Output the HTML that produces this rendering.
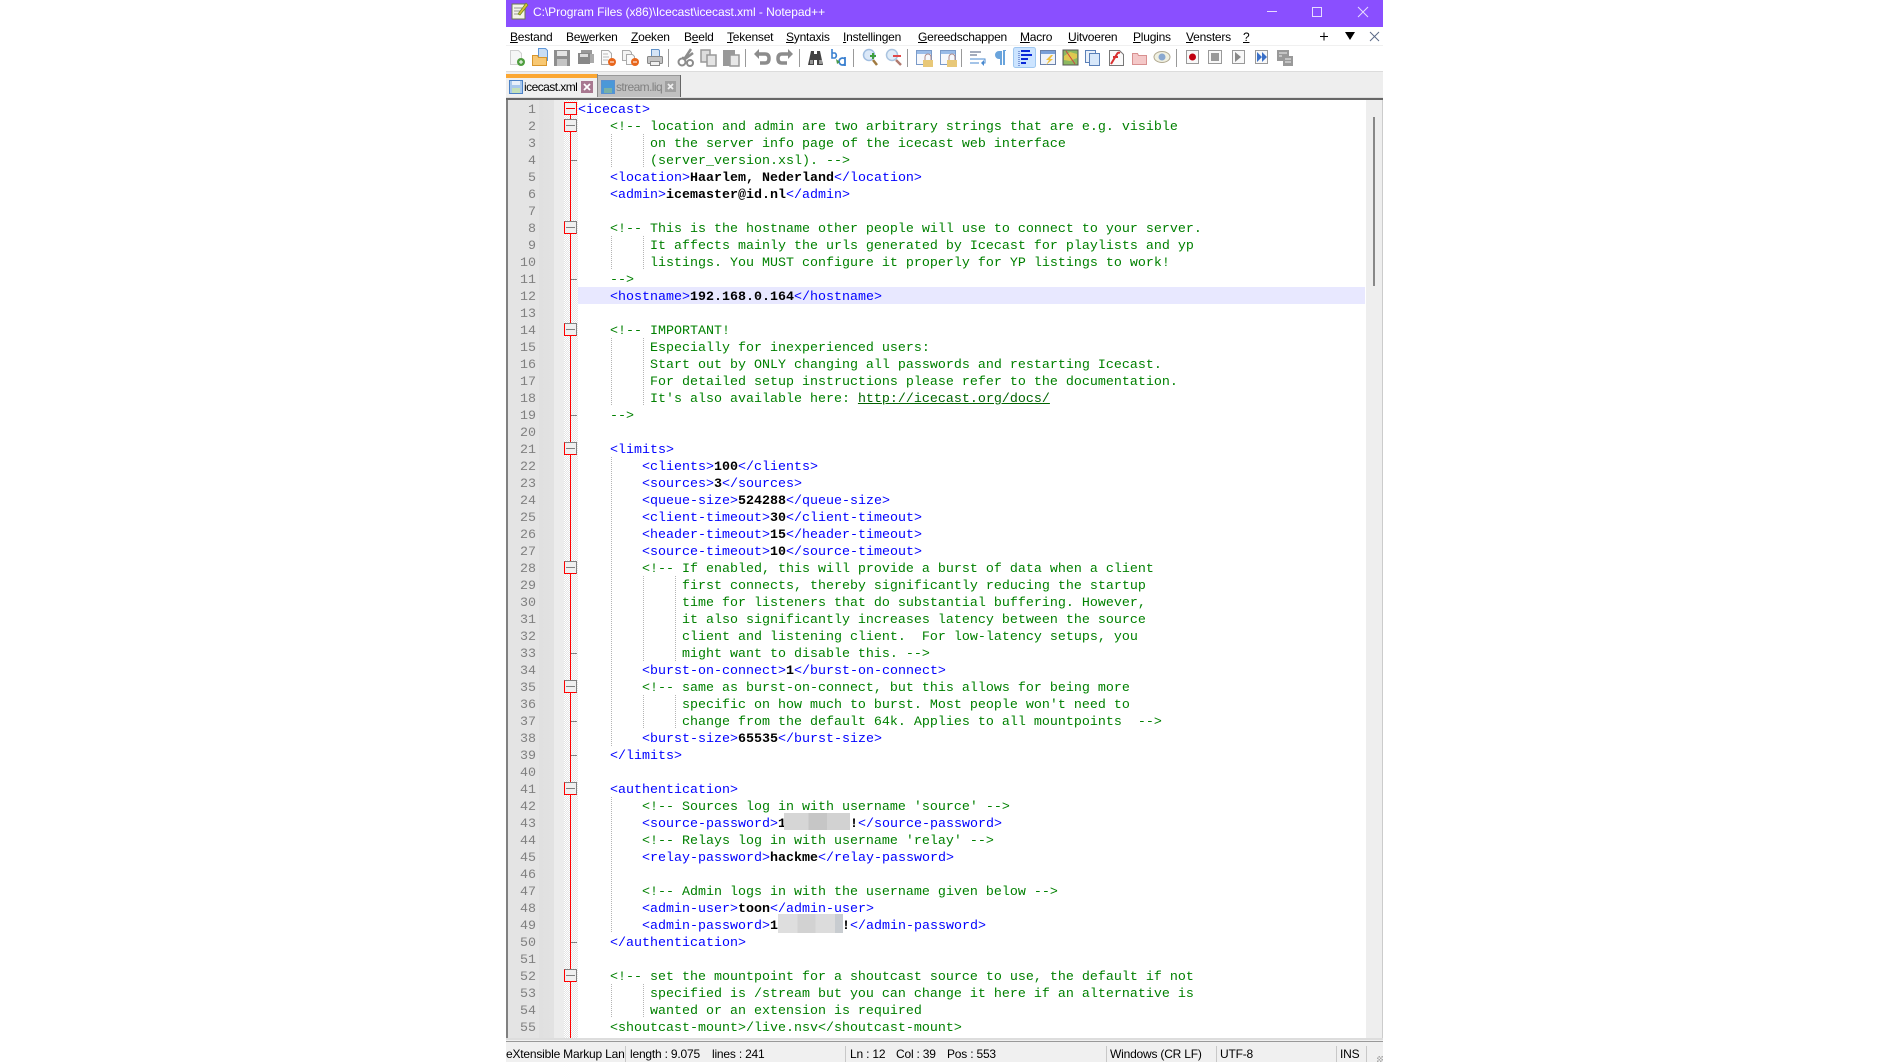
<!DOCTYPE html>
<html><head><meta charset="utf-8"><title>Notepad++</title>
<style>
html,body{margin:0;padding:0;width:1888px;height:1062px;overflow:hidden;background:#fff}
.a,.t,.m,.s{position:absolute}
.t,.m,.s{font-family:"Liberation Sans",sans-serif;white-space:pre}
.m{top:28px;font-size:12px;line-height:18px;color:#000;letter-spacing:-.22px}
.s{top:1046px;font-size:12px;line-height:17px;color:#000;letter-spacing:-.2px}
pre{position:absolute;margin:0;left:578px;top:102px;font:13.333px/17px "Liberation Mono",monospace;color:#008000}
pre b{color:#000;font-weight:700}
pre i{font-style:normal;color:#00f}
pre u{color:#006400}
#nums{position:absolute;left:507px;top:102px;width:29px;text-align:right;font:13.333px/17px "Liberation Mono",monospace;color:#808080;white-space:pre}
.g{position:absolute;width:1px;background:repeating-linear-gradient(to bottom,#b4b4b4 0 1px,transparent 1px 2px)}
.f{position:absolute;left:564px;width:13px;height:13px;box-sizing:border-box;background:#f0f0f0;border:1px solid #808080;border-left-color:#f00;border-bottom-color:#f00}
.f:after{content:"";position:absolute;left:1px;right:1px;top:5px;height:1px;background:#808080}
.k{position:absolute;left:571px;width:6px;height:1px;background:#808080}
.sp{position:absolute;width:1px;top:1046px;height:16px;background:#c8c8c8}
</style></head><body>
<div class="a" style="left:506px;top:0;width:877px;height:27px;background:#8a4fff"></div>
<div class="t" style="left:533px;top:3px;font-size:12px;line-height:18px;color:#fff;letter-spacing:-.05px">C:\Program Files (x86)\Icecast\icecast.xml - Notepad++</div>
<svg class="a" style="left:0;top:0" width="1888" height="100" viewBox="0 0 1888 100">
<!-- app icon -->
<rect x="512" y="4" width="13" height="15" fill="#f4f4e8" stroke="#6a7a50"/><path d="M514 8h8M514 11h6M514 14h6" stroke="#999"/><path d="M518 14l8-11 2 2-8 10z" fill="#d9c23a" stroke="#6a8a20" stroke-width=".7"/>
<!-- window controls -->
<path d="M1267 11.500h10" stroke="#e8dcff"/><rect x="1312.500" y="7.500" width="9" height="9" fill="none" stroke="#e8dcff"/><path d="M1358 7l10 10M1368 7l-10 10" stroke="#e8dcff"/>
<!-- close x right -->
<path d="M1370 32l9 9M1379 32l-9 9" stroke="#5a6a88" fill="none"/>
<path d="M1345 32h10l-5 8z" fill="#000"/><path d="M1320 36.500h8M1324 32.500v8" stroke="#000"/>
<!-- toolbar -->
<rect x="506" y="45" width="877" height="1" fill="#f0f0f0"/>
<rect x="506" y="71" width="877" height="27" fill="#eee"/><rect x="506" y="71" width="877" height="1" fill="#dcdcdc"/>
<!-- new -->
<path d="M510.500 50.500h8l3 3v11h-11z" fill="#f6f6f6" stroke="#d0d0d0"/><circle cx="521" cy="62" r="4" fill="#4f9e3f"/><path d="M519 62h4M521 60v4" stroke="#fff"/>
<!-- open -->
<path d="M538.500 48.500h7l2 2v10h-9z" fill="#c8ddf4" stroke="#5f97d8"/><path d="M532.500 55.500h5l1 2h8v8h-14z" fill="#f8c873" stroke="#d8962c"/>
<!-- save -->
<rect x="554" y="50" width="16" height="16" fill="#8e8e8e"/><rect x="557" y="51" width="10" height="5" fill="#e4e4e4"/><rect x="557" y="59" width="10" height="7" fill="#c4c4c4"/>
<!-- save all -->
<rect x="581" y="50" width="11" height="9" fill="#999"/><rect x="578" y="53" width="12" height="11" fill="#888"/><rect x="580" y="54" width="8" height="3" fill="#ddd"/>
<rect x="590" y="54" width="4" height="9" fill="#aaa"/>
<!-- close -->
<path d="M601.500 50.500h7l3 3v11h-10z" fill="#fafafa" stroke="#aaa"/><path d="M603 54h5M603 57h6M603 60h5" stroke="#bbb"/><circle cx="612" cy="62" r="4" fill="#e8661c"/><path d="M610 62h4" stroke="#fff"/>
<!-- close all -->
<path d="M622.500 50.500h7l2 2v8h-9z" fill="#f4f4f4" stroke="#aaa"/><path d="M626.500 54.500h6l2 2v8h-8z" fill="#fafafa" stroke="#aaa"/><circle cx="635" cy="62" r="4" fill="#e8661c"/><path d="M633 62h4" stroke="#fff"/>
<!-- print -->
<path d="M651.500 49.500h7l1 1v7h-8z" fill="#d4e4f6" stroke="#6292c8"/><rect x="647.500" y="56.500" width="15" height="7" rx="1" fill="#c4c4c4" stroke="#888"/><rect x="650.500" y="61.500" width="9" height="4" fill="#f0f0f0" stroke="#888"/>
<g fill="#999"><rect x="668" y="49" width="1" height="18"/><rect x="745" y="49" width="1" height="18"/><rect x="799" y="49" width="1" height="18"/><rect x="853" y="49" width="1" height="18"/><rect x="907" y="49" width="1" height="18"/><rect x="961" y="49" width="1" height="18"/><rect x="1176" y="49" width="1" height="18"/></g>
<!-- cut -->
<path d="M691 49l-6 9-3 0M693 53l-8 6" stroke="#8c8c8c" stroke-width="2.500" fill="none"/><circle cx="682" cy="62" r="3.500" fill="none" stroke="#8c8c8c" stroke-width="2"/><circle cx="690" cy="63" r="3" fill="none" stroke="#8c8c8c" stroke-width="2"/>
<!-- copy -->
<rect x="701" y="50" width="9" height="12" fill="#ddd" stroke="#999" stroke-width="1.500"/><rect x="707" y="55" width="9" height="11" fill="#e4e4e4" stroke="#999" stroke-width="1.500"/>
<!-- paste -->
<rect x="723" y="50" width="12" height="16" fill="#999"/><rect x="730" y="55" width="9" height="11" fill="#e8e8e8" stroke="#999" stroke-width="1.500"/>
<!-- undo redo -->
<path d="M757 54h8q4 0 4 4.500t-4 4.500h-5" fill="none" stroke="#8c8c8c" stroke-width="3.500"/><path d="M754 54l5-5v10z" fill="#8c8c8c"/>
<path d="M790 54h-8q-4 0-4 4.500t4 4.500h5" fill="none" stroke="#8c8c8c" stroke-width="3.500"/><path d="M793 54l-5-5v10z" fill="#8c8c8c"/>
<!-- find -->
<path d="M811 51h3v3h3v-3h3l3 14h-6v-5h-3v5h-6z" fill="#444"/><rect x="810" y="60" width="3" height="4" fill="#999"/><rect x="819" y="60" width="3" height="4" fill="#999"/>
<!-- replace -->
<path d="M832 49v9h3a3 3 0 0 0 0-5h-3" fill="none" stroke="#3a80d0" stroke-width="1.600"/><path d="M845 59a3.500 3.500 0 1 0 0 5v2M845 57v9" fill="none" stroke="#3a80d0" stroke-width="1.800"/><path d="M836 59l4 3-3 2" fill="#4a9a4a"/>
<!-- zoom -->
<circle cx="869" cy="55" r="5.500" fill="#dbe8f8" stroke="#a0bde0" stroke-width="1.500"/><path d="M873 60l4 5" stroke="#a07a40" stroke-width="2.500"/><path d="M870 56h6M873 53v6" stroke="#3e9e3e" stroke-width="2"/>
<circle cx="892" cy="55" r="5.500" fill="#e0ecf8" stroke="#aac4e0" stroke-width="1.500"/><path d="M896 60l5 5" stroke="#b07a70" stroke-width="2.500"/><path d="M893 56h8" stroke="#e04848" stroke-width="2"/>
<!-- sync -->
<rect x="916.500" y="50.500" width="15" height="14" fill="#f6f8fc" stroke="#7a9ac8"/><rect x="917" y="51" width="14" height="3" fill="#9abce8"/><path d="M925 60v-3a3 3 0 0 1 6 0v3" fill="none" stroke="#a88"/><rect x="923" y="60" width="10" height="7" fill="#e8c878"/>
<rect x="940.500" y="50.500" width="15" height="14" fill="#f6f8fc" stroke="#7a9ac8"/><rect x="941" y="51" width="14" height="3" fill="#9abce8"/><path d="M949 60v-3a3 3 0 0 1 6 0v3" fill="none" stroke="#a88"/><rect x="947" y="60" width="10" height="7" fill="#e8c878"/>
<!-- wrap -->
<path d="M970 52h11M970 55h7" stroke="#4a5a78" fill="none"/><path d="M970 63h9M970 59h15v4h-2" stroke="#4a8ad0" fill="none"/><path d="M981 63l3-3v6z" fill="#4a8ad0"/>
<!-- pilcrow -->
<path d="M1003 51h-4a3.500 3.500 0 0 0 0 8h1v6h2v-14M1003 51v14h2v-14h1v-1h-3z" fill="#6aa4dc"/>
<!-- active -->
<rect x="1013.500" y="47.500" width="22" height="20" rx="2" fill="#cce4ff" stroke="#a0c8f0"/>
<path d="M1019 51v15" stroke="#3050b0" stroke-dasharray="1 1"/><path d="M1021 51h9M1021 55h11M1021 59h7M1021 63h5" stroke="#0a28d8" stroke-width="2"/>
<!-- udl -->
<rect x="1040.500" y="50.500" width="15" height="14" fill="#eef3fb" stroke="#6a80a8"/><rect x="1041" y="51" width="14" height="3" fill="#7aa0d8"/><path d="M1051 55l-5 5h3l-3 5 7-6h-3l3-4z" fill="#f0c040"/>
<!-- doc map -->
<rect x="1063" y="50" width="15" height="15" fill="#8cb860" stroke="#555"/><path d="M1064 56l6-4 7 2v4l-7 3-6-1z" fill="#e0c850"/><path d="M1066 51l9 13" stroke="#d04040"/>
<!-- doc list -->
<rect x="1085.500" y="50.500" width="10" height="12" fill="#e8f0fa" stroke="#5a80b8"/><rect x="1089.500" y="53.500" width="10" height="12" fill="#d8e8fa" stroke="#5a80b8"/>
<!-- func -->
<path d="M1109.500 50.500h10l4 4v11h-14z" fill="#fafafa" stroke="#777"/><path d="M1111 64l6-10q1-2 3-1M1113 57h5" stroke="#d83030" stroke-width="2" fill="none"/>
<!-- folder -->
<path d="M1132.500 53.500h5l1 2h8v9h-14z" fill="#f4c8c8" stroke="#d89090"/>
<!-- monitor -->
<ellipse cx="1162" cy="57" rx="8" ry="5.500" fill="#f0f0e0" stroke="#b0a890"/><circle cx="1162" cy="57" r="3.500" fill="#8aa8d0"/>
<!-- macro -->
<rect x="1186.500" y="50.500" width="12" height="13" fill="#f8f8f8" stroke="#999"/><circle cx="1192.500" cy="57" r="3.500" fill="#c00010"/>
<rect x="1208.500" y="50.500" width="13" height="13" fill="#f8f8f8" stroke="#999"/><rect x="1211" y="53" width="8" height="8" fill="#999"/>
<rect x="1232.500" y="50.500" width="12" height="13" fill="#f8f8f8" stroke="#999"/><path d="M1235 52l6 5-6 5z" fill="#888"/>
<rect x="1255.500" y="50.500" width="12" height="13" fill="#f8f8f8" stroke="#999"/><path d="M1257 52l5 5-5 5zM1262 52l5 5-5 5z" fill="#3a70c8"/>
<rect x="1277" y="50" width="12" height="11" fill="#999"/><rect x="1283" y="56" width="10" height="10" fill="#999"/><path d="M1279 53h8M1279 56h3M1285 59h6M1285 62h6" stroke="#eee"/>
<!-- tabs -->
<rect x="506" y="74" width="91" height="23" fill="#f0f0f0"/><rect x="506" y="74" width="91" height="4" fill="#fba733"/>
<rect x="597" y="74" width="1" height="23" fill="#888"/>
<rect x="598" y="75" width="82" height="22" fill="#c0c0c0"/><rect x="598" y="75" width="82" height="1" fill="#999"/><rect x="680" y="75" width="1" height="22" fill="#666"/>
<rect x="509.500" y="80.500" width="13" height="13" fill="#a8c8ec" stroke="#4a80c4"/><rect x="512" y="81" width="8" height="4" fill="#e8f0fa"/><rect x="512" y="88" width="8" height="5" fill="#c4e0b8"/>
<rect x="581" y="81" width="12" height="12" fill="#a87890"/><path d="M584 84l6 6M590 84l-6 6" stroke="#fff" stroke-width="1.800"/>
<rect x="601.500" y="80.500" width="13" height="13" fill="#4a98d8" stroke="#5a90d0"/><rect x="604" y="88" width="8" height="5" fill="#78b0a8"/>
<rect x="665" y="81" width="11" height="11" fill="#a0a0a0"/><path d="M668 84l5 5M673 84l-5 5" stroke="#eee" stroke-width="1.800"/>
</svg>
<div class="t" style="left:524px;top:78px;font-size:12px;line-height:18px;color:#000;letter-spacing:-.55px">icecast.xml</div>
<div class="t" style="left:616px;top:78px;font-size:12px;line-height:18px;color:#808080;letter-spacing:-.6px">stream.liq</div>
<div class="m" style="left:510px"><u>B</u>estand</div>
<div class="m" style="left:566px">Be<u>w</u>erken</div>
<div class="m" style="left:631px"><u>Z</u>oeken</div>
<div class="m" style="left:684px">B<u>e</u>eld</div>
<div class="m" style="left:727px"><u>T</u>ekenset</div>
<div class="m" style="left:786px"><u>S</u>yntaxis</div>
<div class="m" style="left:843px"><u>I</u>nstellingen</div>
<div class="m" style="left:918px"><u>G</u>ereedschappen</div>
<div class="m" style="left:1020px"><u>M</u>acro</div>
<div class="m" style="left:1068px"><u>U</u>itvoeren</div>
<div class="m" style="left:1133px"><u>P</u>lugins</div>
<div class="m" style="left:1186px"><u>V</u>ensters</div>
<div class="m" style="left:1243px"><u>?</u></div>

<!-- editor frame -->
<div class="a" style="left:506px;top:97px;width:877px;height:1px;background:#ddd"></div>
<div class="a" style="left:506px;top:98px;width:877px;height:2px;background:#666"></div>
<div class="a" style="left:506px;top:100px;width:2px;height:938px;background:#808080"></div>
<div class="a" style="left:508px;top:100px;width:31px;height:938px;background:#e4e4e4"></div>
<div class="a" style="left:539px;top:100px;width:25px;height:938px;background:linear-gradient(to right,#e0e0e0,#e2e2e2 60%,#ececec 60%,#ececec)"></div>
<div class="a" style="left:564px;top:100px;width:14px;height:938px;background:repeating-conic-gradient(#e4e4e4 0 25%,#fff 0 50%) 0 0/2px 2px"></div>
<div class="a" style="left:578px;top:287px;width:787px;height:17px;background:#e8e8ff"></div>
<div class="a" style="left:1366px;top:100px;width:16px;height:938px;background:#eee"></div>
<div class="a" style="left:1382px;top:100px;width:1px;height:938px;background:#ccc"></div>
<div class="a" style="left:1373px;top:117px;width:2px;height:169px;background:#888"></div>

<div class="a" style="left:570px;top:115px;width:1px;height:923px;background:#f00"></div>
<div class="f" style="top:102px;border-color:#f00"></div><div class="a" style="left:566px;top:108px;width:9px;height:1px;background:#f00"></div>
<div class="f" style="top:119px"></div><div class="f" style="top:221px"></div><div class="f" style="top:323px"></div><div class="f" style="top:442px"></div><div class="f" style="top:561px"></div><div class="f" style="top:680px"></div><div class="f" style="top:782px"></div><div class="f" style="top:969px"></div>
<div class="k" style="top:160px"></div><div class="k" style="top:279px"></div><div class="k" style="top:415px"></div><div class="k" style="top:653px"></div><div class="k" style="top:721px"></div><div class="k" style="top:755px"></div><div class="k" style="top:942px"></div>

<div class="g" style="left:611px;top:134px;height:34px"></div><div class="g" style="left:643px;top:134px;height:34px"></div>
<div class="g" style="left:611px;top:236px;height:34px"></div><div class="g" style="left:643px;top:236px;height:34px"></div>
<div class="g" style="left:611px;top:338px;height:68px"></div><div class="g" style="left:643px;top:338px;height:68px"></div>
<div class="g" style="left:611px;top:457px;height:289px"></div>
<div class="g" style="left:643px;top:576px;height:85px"></div><div class="g" style="left:675px;top:576px;height:85px"></div>
<div class="g" style="left:643px;top:695px;height:34px"></div><div class="g" style="left:675px;top:695px;height:34px"></div>
<div class="g" style="left:611px;top:797px;height:136px"></div>
<div class="g" style="left:611px;top:984px;height:34px"></div><div class="g" style="left:643px;top:984px;height:34px"></div>

<div id="nums">1
2
3
4
5
6
7
8
9
10
11
12
13
14
15
16
17
18
19
20
21
22
23
24
25
26
27
28
29
30
31
32
33
34
35
36
37
38
39
40
41
42
43
44
45
46
47
48
49
50
51
52
53
54
55</div>
<pre><i>&lt;icecast&gt;</i>
    &lt;!-- location and admin are two arbitrary strings that are e.g. visible
         on the server info page of the icecast web interface
         (server_version.xsl). --&gt;
    <i>&lt;location&gt;</i><b>Haarlem, Nederland</b><i>&lt;/location&gt;</i>
    <i>&lt;admin&gt;</i><b>icemaster@id.nl</b><i>&lt;/admin&gt;</i>

    &lt;!-- This is the hostname other people will use to connect to your server.
         It affects mainly the urls generated by Icecast for playlists and yp
         listings. You MUST configure it properly for YP listings to work!
    --&gt;
    <i>&lt;hostname&gt;</i><b>192.168.0.164</b><i>&lt;/hostname&gt;</i>

    &lt;!-- IMPORTANT!
         Especially for inexperienced users:
         Start out by ONLY changing all passwords and restarting Icecast.
         For detailed setup instructions please refer to the documentation.
         It's also available here: <u>http://icecast.org/docs/</u>
    --&gt;

    <i>&lt;limits&gt;</i>
        <i>&lt;clients&gt;</i><b>100</b><i>&lt;/clients&gt;</i>
        <i>&lt;sources&gt;</i><b>3</b><i>&lt;/sources&gt;</i>
        <i>&lt;queue-size&gt;</i><b>524288</b><i>&lt;/queue-size&gt;</i>
        <i>&lt;client-timeout&gt;</i><b>30</b><i>&lt;/client-timeout&gt;</i>
        <i>&lt;header-timeout&gt;</i><b>15</b><i>&lt;/header-timeout&gt;</i>
        <i>&lt;source-timeout&gt;</i><b>10</b><i>&lt;/source-timeout&gt;</i>
        &lt;!-- If enabled, this will provide a burst of data when a client
             first connects, thereby significantly reducing the startup
             time for listeners that do substantial buffering. However,
             it also significantly increases latency between the source
             client and listening client.  For low-latency setups, you
             might want to disable this. --&gt;
        <i>&lt;burst-on-connect&gt;</i><b>1</b><i>&lt;/burst-on-connect&gt;</i>
        &lt;!-- same as burst-on-connect, but this allows for being more
             specific on how much to burst. Most people won't need to
             change from the default 64k. Applies to all mountpoints  --&gt;
        <i>&lt;burst-size&gt;</i><b>65535</b><i>&lt;/burst-size&gt;</i>
    <i>&lt;/limits&gt;</i>

    <i>&lt;authentication&gt;</i>
        &lt;!-- Sources log in with username 'source' --&gt;
        <i>&lt;source-password&gt;</i><b>1</b>        <b>!</b><i>&lt;/source-password&gt;</i>
        &lt;!-- Relays log in with username 'relay' --&gt;
        <i>&lt;relay-password&gt;</i><b>hackme</b><i>&lt;/relay-password&gt;</i>

        &lt;!-- Admin logs in with the username given below --&gt;
        <i>&lt;admin-user&gt;</i><b>toon</b><i>&lt;/admin-user&gt;</i>
        <i>&lt;admin-password&gt;</i><b>1</b>        <b>!</b><i>&lt;/admin-password&gt;</i>
    <i>&lt;/authentication&gt;</i>

    &lt;!-- set the mountpoint for a shoutcast source to use, the default if not
         specified is /stream but you can change it here if an alternative is
         wanted or an extension is required
    &lt;shoutcast-mount&gt;/live.nsv&lt;/shoutcast-mount&gt;</pre>

<!-- redactions -->
<div class="a" style="left:784px;top:813px;width:66px;height:17px;background:linear-gradient(to right,#d6d6d6 0 37%,#c6c6c6 37% 65%,#d2d2d2 65%)"></div>
<div class="a" style="left:778px;top:914px;width:65px;height:19px;background:linear-gradient(to right,#dedede 0 30%,#d2d2d2 30% 58%,#dcdcdc 58% 88%,#c8ccd0 88%)"></div>

<!-- status -->
<div class="a" style="left:506px;top:1038px;width:877px;height:24px;background:#f0f0f0"></div>
<div class="a" style="left:506px;top:1038px;width:877px;height:2px;background:#ddd"></div>
<div class="a" style="left:506px;top:1041px;width:877px;height:1px;background:#999"></div>
<div class="a" style="left:506px;top:1042px;width:119px;height:20px;overflow:hidden"><div class="s" style="left:0;top:4px">eXtensible Markup Language file</div></div>
<div class="sp" style="left:625px"></div><div class="sp" style="left:845px"></div><div class="sp" style="left:1106px"></div><div class="sp" style="left:1216px"></div><div class="sp" style="left:1336px"></div><div class="sp" style="left:1366px"></div>
<div class="s" style="left:630px">length : 9.075</div>
<div class="s" style="left:712px">lines : 241</div>
<div class="s" style="left:850px">Ln : 12</div>
<div class="s" style="left:896px">Col : 39</div>
<div class="s" style="left:947px">Pos : 553</div>
<div class="s" style="left:1110px">Windows (CR LF)</div>
<div class="s" style="left:1220px">UTF-8</div>
<div class="s" style="left:1340px">INS</div>
<div class="a" style="left:1377px;top:1056px;width:6px;height:6px;background:repeating-conic-gradient(#aaa 0 25%,transparent 0 50%) 0 0/3px 3px"></div>
</body></html>
